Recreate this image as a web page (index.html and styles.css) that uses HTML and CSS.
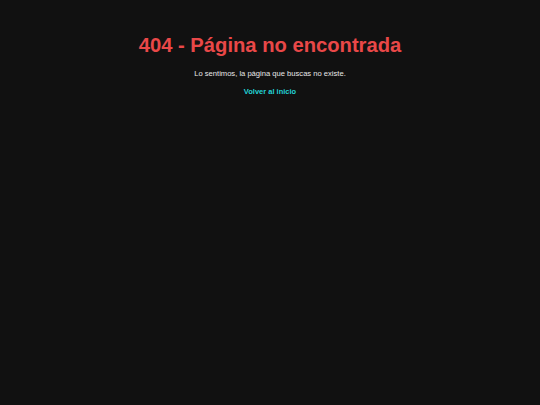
FILE: index.html
```html
<!DOCTYPE html>
<html lang="es">
<head>
<meta charset="utf-8">
<link rel="stylesheet" href="styles.css">
</head>
<body>
<main class="page">
  <h1 class="title">404 - Página no encontrada</h1>
  <p class="message">Lo sentimos, la página que buscas no existe.</p>
  <a class="home" href="#">Volver al inicio</a>
</main>
</body>
</html>
```
FILE: styles.css
```css
html, body {
  margin: 0;
  padding: 0;
  background: #111111;
  height: 100%;
}
body {
  font-family: "Liberation Sans", Arial, sans-serif;
  color: #f0f0f0;
}
.page {
  display: flex;
  flex-direction: column;
  align-items: center;
  text-align: center;
  padding-top: 34px;
}
.title {
  margin: 0;
  font-size: 20.2px;
  font-weight: bold;
  color: #e94848;
  line-height: 23px;
}
.message {
  margin: 12px 0 0;
  font-size: 7.6px;
  line-height: 10px;
  color: #e8e8e8;
}
.home {
  margin-top: 8px;
  font-size: 7.5px;
  line-height: 10px;
  font-weight: bold;
  color: #22d3d6;
  text-decoration: none;
}
```
